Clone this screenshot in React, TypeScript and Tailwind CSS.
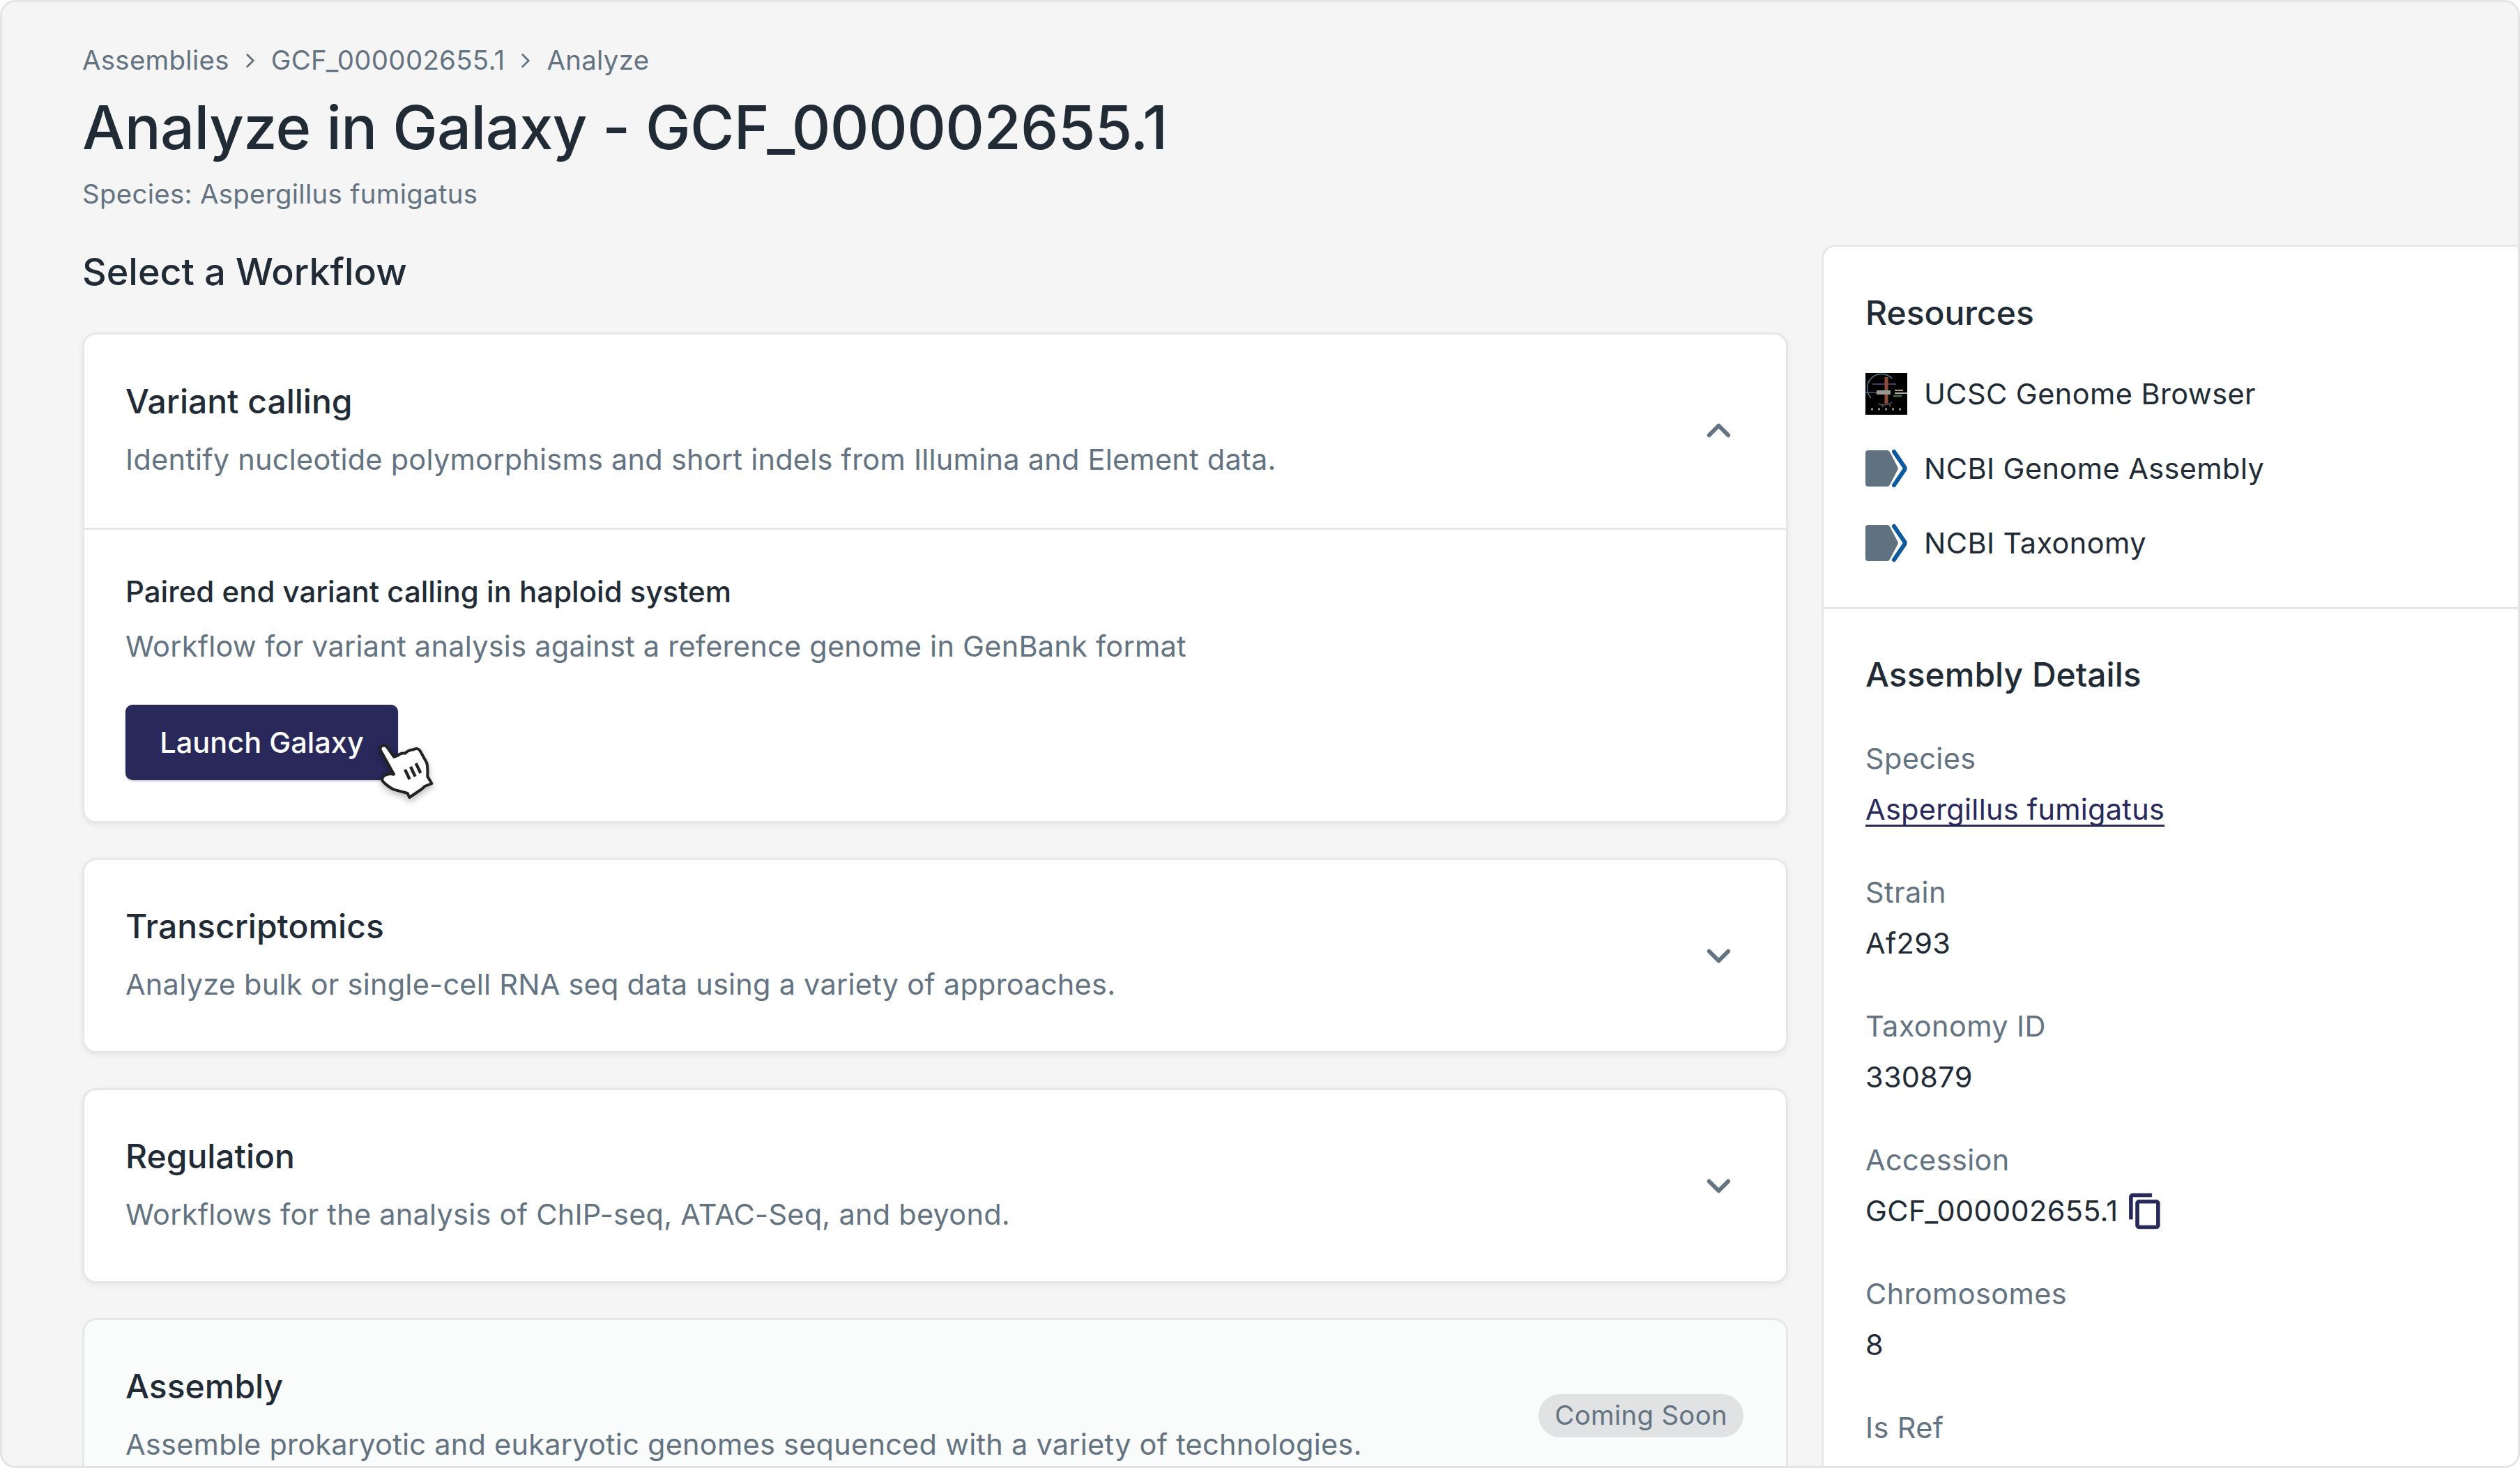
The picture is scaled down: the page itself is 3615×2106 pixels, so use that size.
import { ChevronDown, ChevronRight, ChevronUp } from "lucide-react";

const details = [
  { label: "Species", value: "Aspergillus fumigatus", link: true },
  { label: "Strain", value: "Af293" },
  { label: "Taxonomy ID", value: "330879" },
  { label: "Accession", value: "GCF_000002655.1", copy: true },
  { label: "Chromosomes", value: "8" },
  { label: "Is Ref" },
];

const workflows = [
  {
    title: "Transcriptomics",
    description: "Analyze bulk or single-cell RNA seq data using a variety of approaches.",
  },
  {
    title: "Regulation",
    description: "Workflows for the analysis of ChIP-seq, ATAC-Seq, and beyond.",
  },
];

function CardHeader({ title, description }: { title: string; description: string }) {
  return (
    <div className="pb-[6px]">
      <h3 className="text-[48px] leading-[70px] font-medium text-[#212b36]">{title}</h3>
      <p className="mt-[17px] text-[41.500px] leading-[62px] tracking-[0.23px] text-[#637381]">{description}</p>
    </div>
  );
}

function UcscLogo() {
  return (
    <svg viewBox="0 0 60 60" className="h-[60px] w-[60px] shrink-0 bg-black">
      <path d="M8 36a20 20 0 0 1 30-28" fill="none" stroke="#5b7f92" strokeWidth="1.400" />
      <path d="M38 42a18 18 0 0 1-20 2" fill="none" stroke="#4b6a78" strokeWidth="1.200" />
      <path d="M10 16h34" stroke="#6f4688" strokeWidth="1.500" />
      <path d="M30 6v38" stroke="#8f4c38" strokeWidth="5" />
      <path d="M0 28h18" stroke="#6f8fc0" strokeWidth="1" />
      <path d="M16 28h20" stroke="#9a9a92" strokeWidth="6" />
      <path d="M42 25h12" stroke="#b5a052" strokeWidth="2" />
      <path d="M42 29h18" stroke="#dfe6df" strokeWidth="1.500" />
      <path d="M40 33h12" stroke="#4c6640" strokeWidth="3" />
      <path d="M26 44l-2 5M34 44l2 5" stroke="#7a5034" strokeWidth="1.500" />
      <path d="M8 52h3M18 52h3M28 52h3M38 52h3M48 52h3" stroke="#8c8c8c" strokeWidth="3" />
    </svg>
  );
}

function NcbiLogo() {
  return (
    <svg viewBox="0 0 60 60" className="h-[60px] w-[60px] shrink-0">
      <path d="M4 4h27c2 0 3 1 4 2.500l11 21c1 2 1 3 0 5l-11 21c-1 1.500-2 2.500-4 2.500H4c-2.500 0-4-1.500-4-4V8c0-2.500 1.500-4 4-4z" fill="#607280" />
      <path d="M41 6l15 22c1 1.500 1 2.500 0 4L41 54" fill="none" stroke="#0f5a9c" strokeWidth="6" strokeLinecap="round" strokeLinejoin="round" />
    </svg>
  );
}

function HandCursor() {
  return (
    <svg
      viewBox="0 0 360 360"
      className="absolute left-[-41px] top-[39px] h-[120px] w-[120px] drop-shadow-[0_4px_5px_rgba(0,0,0,0.28)]"
    >
      <path
        d="M47 78C42 60 65 52 75 65L106 108L125 100C135 88 150 92 155 92C160 82 178 78 190 76C200 68 212 72 218 82L246 132C252 150 250 175 250 192L268 222L238 234L225 246L172 282L164 264L105 248C85 238 68 225 57 212C50 200 60 190 72 184C82 180 95 180 105 182Z"
        fill="#fff"
        stroke="#222"
        strokeWidth="12"
        strokeLinejoin="round"
      />
      <path d="M153 162l20 42M177 150l20 42M200 135l20 42" stroke="#222" strokeWidth="13" />
    </svg>
  );
}

export default function App() {
  return (
    <div
      className="h-[2106px] w-[3615px] overflow-hidden rounded-[22px] border-[3px] border-[#e3e4e6] bg-[#f5f5f5]"
      style={{ fontFamily: "Inter, 'Liberation Sans', sans-serif" }}
    >
      <div className="pl-[115px] pt-[58px]">
        <nav className="flex h-[52px] items-center text-[38.400px] tracking-[0.3px] text-[#637381]">
          <span>Assemblies</span>
          <ChevronRight size={34} strokeWidth={2} className="mx-[13px]" />
          <span>GCF_000002655.1</span>
          <ChevronRight size={34} strokeWidth={2} className="mx-[13px]" />
          <span>Analyze</span>
        </nav>
        <h1 className="mt-[22px] text-[86.400px] leading-[96px] font-medium tracking-[-0.6px] text-[#212b36]">
          Analyze in Galaxy - GCF_000002655.1
        </h1>
        <p className="mt-[21px] text-[38.400px] leading-[52px] tracking-[0.3px] text-[#637381]">
          Species: Aspergillus fumigatus
        </p>
      </div>

      <div className="mt-[47px] flex">
        <div className="ml-[115px] w-[2447px] shrink-0">
          <h2 className="text-[53.800px] leading-[78px] font-medium text-[#212b36]">Select a Workflow</h2>

          <div className="mt-[48px] flex flex-col gap-[50px]">
            <section className="rounded-[20px] border-[3px] border-[#e6e7e9] bg-white shadow-[0_3px_8px_rgba(0,0,0,0.06)]">
              <div className="flex h-[277px] items-center justify-between pl-[59px] pr-[62px]">
                <CardHeader
                  title="Variant calling"
                  description="Identify nucleotide polymorphisms and short indels from Illumina and Element data."
                />
                <ChevronUp size={55} strokeWidth={2.500} className="mb-[2px] mr-[7px] text-[#637381]" />
              </div>
              <div className="border-t-[3px] border-[#e6e7e9] px-[59px] pb-[59px] pt-[58px]">
                <h4 className="text-[42px] leading-[62px] font-medium text-[#212b36]">
                  Paired end variant calling in haploid system
                </h4>
                <p className="mt-[16px] text-[41.500px] leading-[62px] tracking-[0.23px] text-[#637381]">
                  Workflow for variant analysis against a reference genome in GenBank format
                </p>
                <button className="relative mt-[53px] h-[108px] w-[391px] rounded-[10px] bg-[#28285b] text-[41.500px] font-medium text-white shadow-[0_2px_3px_rgba(0,0,0,0.2)]">
                  Launch Galaxy
                  <span className="absolute left-[391px] top-0">
                    <HandCursor />
                  </span>
                </button>
              </div>
            </section>

            {workflows.map((workflow) => (
              <section
                key={workflow.title}
                className="flex h-[280px] items-center justify-between rounded-[20px] border-[3px] border-[#e6e7e9] bg-white pl-[59px] pr-[62px] shadow-[0_3px_8px_rgba(0,0,0,0.06)]"
              >
                <CardHeader title={workflow.title} description={workflow.description} />
                <ChevronDown size={55} strokeWidth={2.500} className="mr-[7px] text-[#637381]" />
              </section>
            ))}

            <section className="flex h-[280px] items-center justify-between rounded-[20px] border-[3px] border-[#e6e7e9] bg-[#fafbfb] pl-[59px] pr-[61px]">
              <CardHeader
                title="Assembly"
                description="Assemble prokaryotic and eukaryotic genomes sequenced with a variety of technologies."
              />
              <span className="flex h-[62px] items-center rounded-full bg-[#e0e2e4] px-[23px] text-[38.400px] tracking-[0.3px] text-[#637381]">
                Coming Soon
              </span>
            </section>
          </div>
        </div>

        <aside className="ml-[48px] flex-1 rounded-tl-[20px] border-l-[3px] border-t-[3px] border-[#e6e7e9] bg-white">
          <div className="border-b-[3px] border-[#e6e7e9] pb-[62px] pl-[60px] pt-[60px]">
            <h2 className="text-[48px] leading-[70px] font-medium text-[#212b36]">Resources</h2>
            <ul className="mt-[51px] flex flex-col gap-[47px]">
              <li className="flex items-center gap-[24px] text-[41.500px] leading-[60px] tracking-[0.4px] text-[#212b36]">
                <UcscLogo />
                UCSC Genome Browser
              </li>
              <li className="flex items-center gap-[24px] text-[41.500px] leading-[60px] tracking-[0.4px] text-[#212b36]">
                <NcbiLogo />
                NCBI Genome Assembly
              </li>
              <li className="flex items-center gap-[24px] text-[41.500px] leading-[60px] tracking-[0.4px] text-[#212b36]">
                <NcbiLogo />
                NCBI Taxonomy
              </li>
            </ul>
          </div>
          <div className="pl-[60px] pt-[59px]">
            <h2 className="text-[48px] leading-[70px] font-medium text-[#212b36]">Assembly Details</h2>
            <dl className="mt-[55px] flex flex-col gap-[58px]">
              {details.map((detail) => (
                <div key={detail.label}>
                  <dt className="text-[41.500px] leading-[60px] tracking-[0.35px] text-[#637381]">{detail.label}</dt>
                  {detail.value && (
                    <dd
                      className={
                        detail.link
                          ? "mt-[12px] flex items-center text-[41.500px] leading-[62px] tracking-[0.25px] text-[#28285b] underline decoration-[3px] underline-offset-[7px] [text-decoration-skip-ink:none]"
                          : "mt-[12px] flex items-center text-[41.500px] leading-[62px] tracking-[0.3px] text-[#212b36]"
                      }
                    >
                      {detail.value}
                      {detail.copy && (
                        <svg
                          viewBox="0 0 24 24"
                          className="ml-[12px] h-[55px] w-[55px] fill-[#28285b] stroke-[#28285b] stroke-[0.4px]"
                        >
                          <path d="M16 1H4c-1.100 0-2 .9-2 2v14h2V3h12V1zm3 4H8c-1.100 0-2 .9-2 2v14c0 1.100.9 2 2 2h11c1.100 0 2-.9 2-2V7c0-1.100-.9-2-2-2zm0 16H8V7h11v14z" />
                        </svg>
                      )}
                    </dd>
                  )}
                </div>
              ))}
            </dl>
          </div>
        </aside>
      </div>
    </div>
  );
}
